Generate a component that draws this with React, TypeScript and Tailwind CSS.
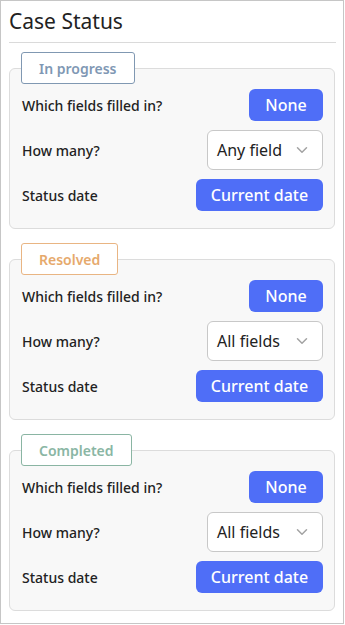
import { ChevronDown } from "lucide-react";

interface StatusSection {
    label: string;
    tabClass: string;
    howMany: string;
}

const sections: StatusSection[] = [
    { label: "In progress", tabClass: "border-[#8098b2] text-[#7f98b4]", howMany: "Any field" },
    { label: "Resolved", tabClass: "border-[#e9b583] text-[#e6a96c]", howMany: "All fields" },
    { label: "Completed", tabClass: "border-[#8ab5a3] text-[#8ab6a4]", howMany: "All fields" },
];

function Row({ label, children }: { label: string; children: React.ReactNode }) {
    return (
        <div className="flex items-center justify-between">
            <span className="text-[14px] font-medium text-[#222]">{label}</span>
            {children}
        </div>
    );
}

function Section({ section }: { section: StatusSection }) {
    return (
        <div className="flex flex-col">
            <div
                className={`relative z-10 ml-3 self-start h-8 px-[17px] flex items-center rounded-[3px] border bg-white text-[14px] font-semibold ${section.tabClass}`}
            >
                {section.label}
            </div>
            <div className="-mt-4 rounded-md border border-[#dcdcdc] bg-[#f8f8f8] pt-[20px] pb-[17px] pl-3 pr-[11px] flex flex-col gap-[9px]">
                <Row label="Which fields filled in?">
                    <button className="h-8 w-[74px] rounded-md bg-[#4f6ef7] text-white text-[16px] font-medium">
                        None
                    </button>
                </Row>
                <Row label="How many?">
                    <div className="h-10 w-[116px] rounded-md border border-[#c8c8c8] bg-white flex items-center justify-between pl-[9px] pr-[11px]">
                        <span className="text-[16px] text-[#222]">{section.howMany}</span>
                        <ChevronDown className="w-[18px] h-[18px] text-[#a3a3a3]" strokeWidth={2} />
                    </div>
                </Row>
                <Row label="Status date">
                    <button className="h-8 w-[127px] rounded-md bg-[#4f6ef7] text-white text-[16px] font-medium">
                        Current date
                    </button>
                </Row>
            </div>
        </div>
    );
}

export default function App() {
    return (
        <div
            className="w-[344px] h-[624px] border border-[#c6c6c6] bg-white px-2 overflow-hidden"
            style={{ fontFamily: "'Noto Sans', 'Open Sans', sans-serif" }}
        >
            <h1 className="pt-[6px] pb-[7px] text-[21px] leading-[28px] text-[#222]">Case Status</h1>
            <div className="h-px bg-[#dadada] mr-[-1px]" />
            <div className="mt-[9px] flex flex-col gap-[14px]">
                {sections.map((s) => (
                    <Section key={s.label} section={s} />
                ))}
            </div>
        </div>
    );
}
